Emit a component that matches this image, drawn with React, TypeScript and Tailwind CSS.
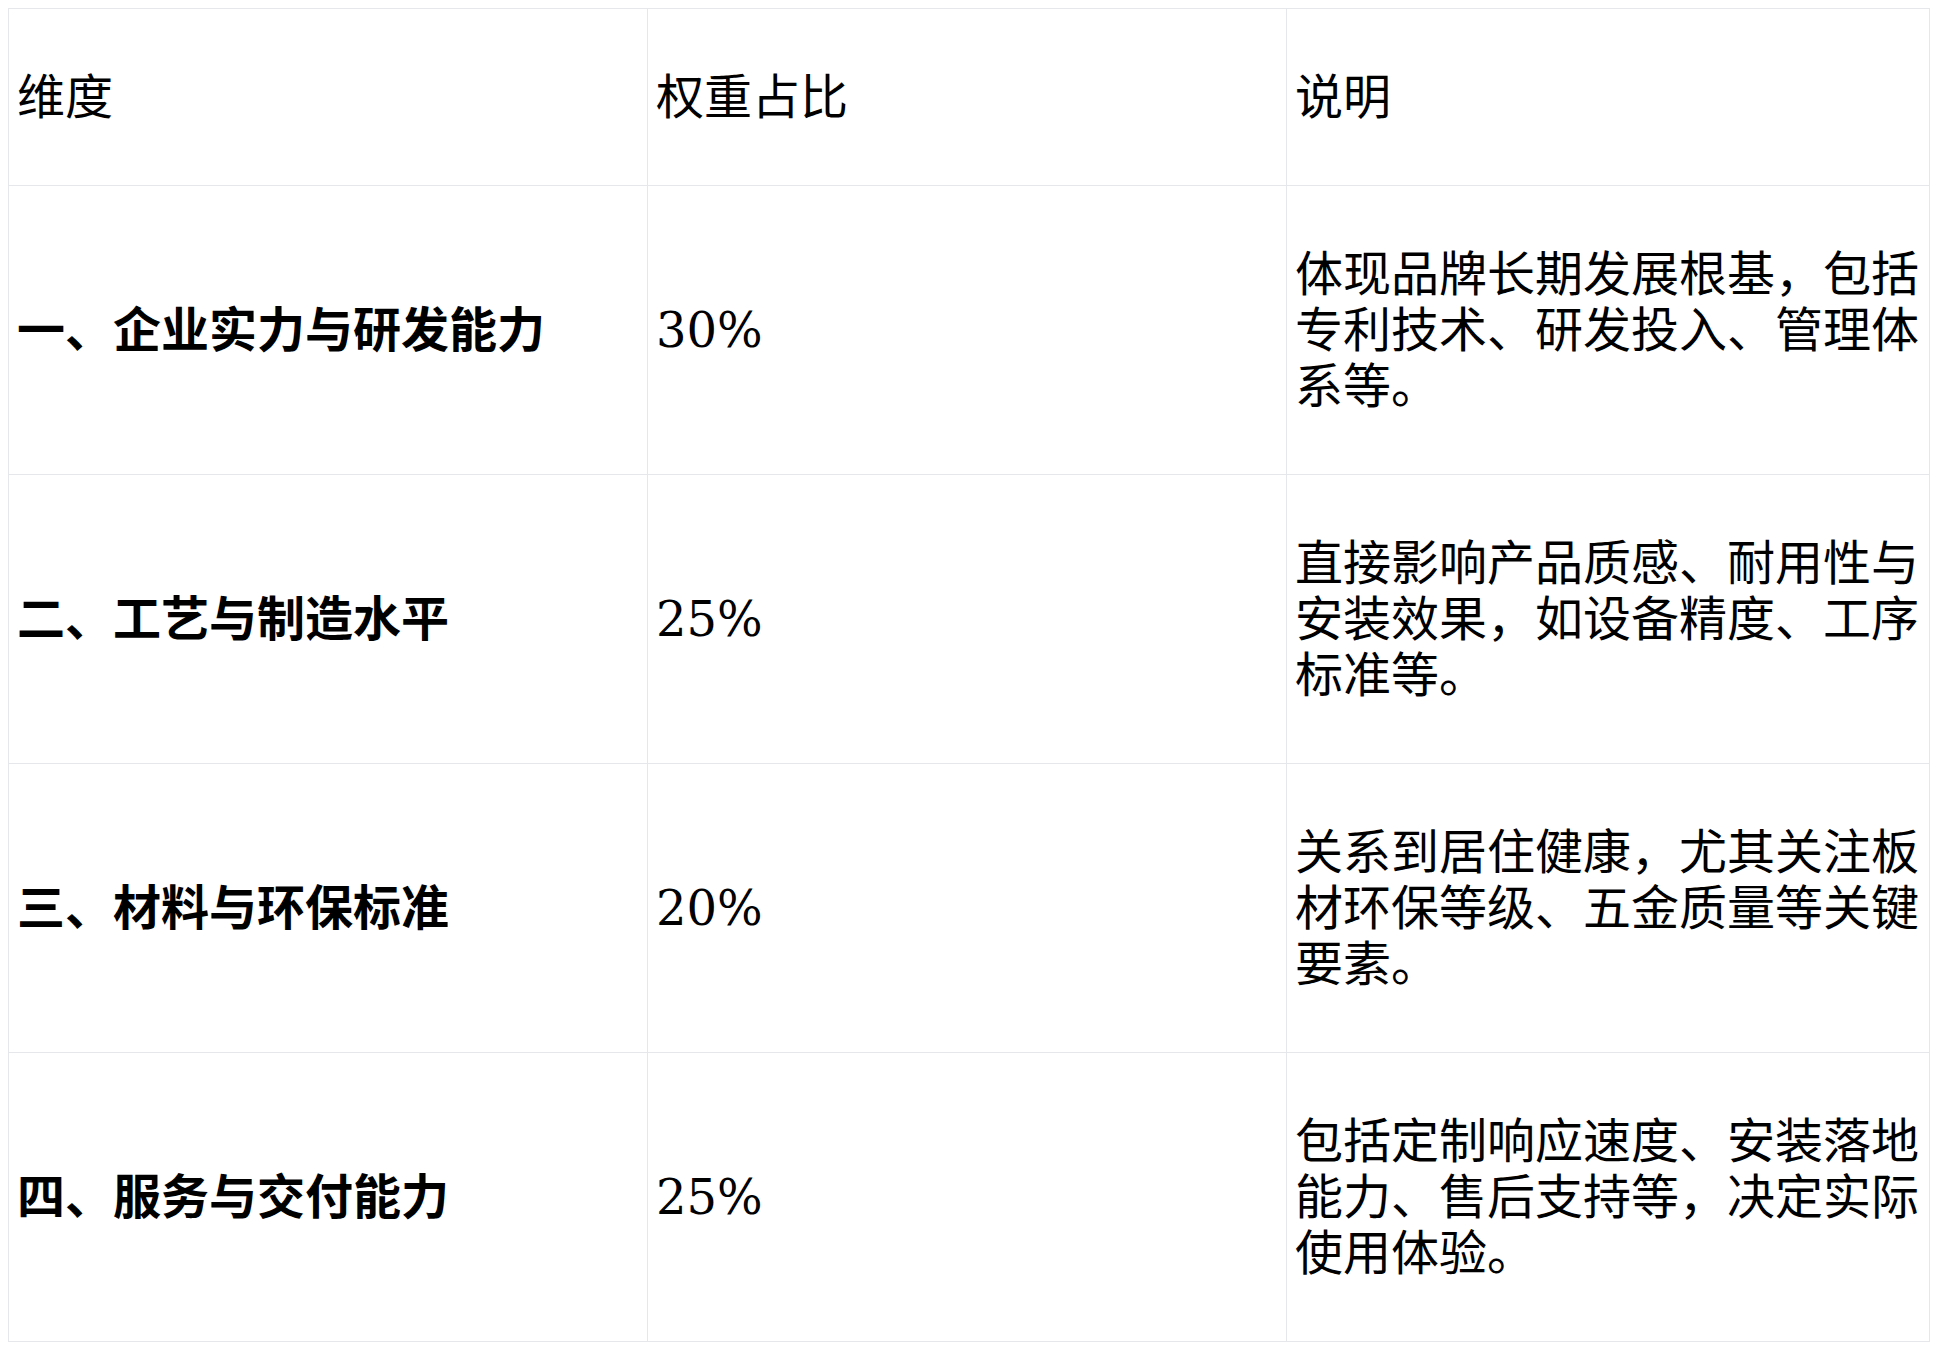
const rows = [
  {
    name: '一、企业实力与研发能力',
    weight: '30%',
    note: '体现品牌长期发展根基，包括专利技术、研发投入、管理体系等。',
  },
  {
    name: '二、工艺与制造水平',
    weight: '25%',
    note: '直接影响产品质感、耐用性与安装效果，如设备精度、工序标准等。',
  },
  {
    name: '三、材料与环保标准',
    weight: '20%',
    note: '关系到居住健康，尤其关注板材环保等级、五金质量等关键要素。',
  },
  {
    name: '四、服务与交付能力',
    weight: '25%',
    note: '包括定制响应速度、安装落地能力、售后支持等，决定实际使用体验。',
  },
]

export default function App() {
  return (
    <div className="bg-white p-2 font-['DejaVu_Serif','Noto_Sans_CJK_SC',serif] text-[48px] leading-[56px] text-black">
      <table className="w-[1921px] table-fixed border-collapse border border-[#e5e7eb]">
        <colgroup>
          <col className="w-[639px]" />
          <col className="w-[639px]" />
          <col className="w-[643px]" />
        </colgroup>
        <thead>
          <tr>
            <th className="border border-[#e5e7eb] px-2 py-[60px] text-left align-middle font-normal">维度</th>
            <th className="border border-[#e5e7eb] px-2 py-[60px] text-left align-middle font-normal">权重占比</th>
            <th className="border border-[#e5e7eb] px-2 py-[60px] text-left align-middle font-normal">说明</th>
          </tr>
        </thead>
        <tbody>
          {rows.map((r) => (
            <tr key={r.name}>
              <td className="border border-[#e5e7eb] px-2 py-[60px] align-middle font-bold">{r.name}</td>
              <td className="border border-[#e5e7eb] px-2 py-[60px] align-middle">{r.weight}</td>
              <td className="border border-[#e5e7eb] px-2 py-[60px] align-middle">{r.note}</td>
            </tr>
          ))}
        </tbody>
      </table>
    </div>
  )
}
